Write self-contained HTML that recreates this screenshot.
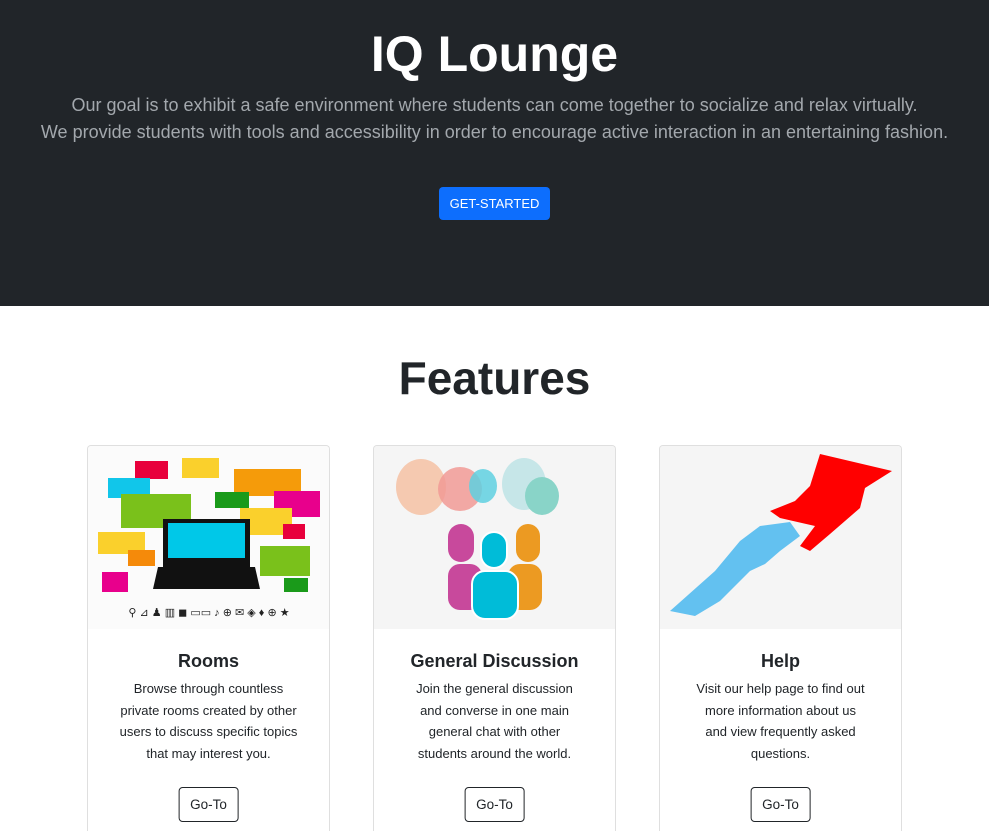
<!DOCTYPE html>
<html><head><meta charset="utf-8"><style>
*{box-sizing:border-box;margin:0;padding:0}
body{width:989px;height:830px;overflow:hidden;background:#fff;font-family:"Liberation Sans",sans-serif;color:#212529;position:relative}
.hero{background:#212529;height:306px;text-align:center;padding-top:24px}
.hero h1{color:#fff;font-size:50px;font-weight:700;line-height:60px}
.hero p{color:#a3a8ad;font-size:18px;line-height:27px;margin-top:8px}
.btn{display:inline-block;margin-top:41px;background:#0d6efd;color:#fff;font-size:13px;height:33px;line-height:33px;border-radius:4px;width:111px;white-space:nowrap}
h2{text-align:center;font-size:46px;font-weight:700;margin-top:44px;line-height:56px}
.card{position:absolute;top:445px;width:243px;height:386px;border:1px solid #dfdfdf;border-bottom:none;border-radius:4px 4px 0 0;overflow:hidden;text-align:center}
.img{height:183px;background:#f5f5f5}
.card h3{font-size:18px;font-weight:700;margin-top:21px;line-height:22px}
.card p{font-size:13px;line-height:21.7px;margin:6px auto 0;width:230px;white-space:nowrap}
.go{position:absolute;top:341px;left:50%;transform:translateX(-50%);border:1px solid #212529;border-radius:4px;height:35px;line-height:33px;padding:0 11px;font-size:13.5px;white-space:nowrap}
</style></head><body>
<div class="hero"><h1>IQ Lounge</h1>
<p>Our goal is to exhibit a safe environment where students can come together to socialize and relax virtually.<br>We provide students with tools and accessibility in order to encourage active interaction in an entertaining fashion.</p>
<span class="btn">GET-STARTED</span></div>
<h2>Features</h2>
<div class="card" style="left:87px"><div class="img" style="background:#fbfbfb"><svg width="243" height="183">
<rect x="47" y="15" width="33" height="18" fill="#e8003c"/><rect x="94" y="12" width="37" height="20" fill="#fad02c"/>
<rect x="20" y="32" width="42" height="20" fill="#11c6ea"/><rect x="146" y="23" width="67" height="27" fill="#f59b0a"/>
<rect x="33" y="48" width="70" height="34" fill="#7ac11b"/><rect x="127" y="46" width="34" height="16" fill="#1a9a1a"/>
<rect x="186" y="45" width="46" height="26" fill="#e8008c"/><rect x="152" y="62" width="52" height="27" fill="#fad02c"/>
<rect x="10" y="86" width="47" height="22" fill="#fad02c"/><rect x="40" y="104" width="27" height="16" fill="#f58a0a"/>
<rect x="195" y="78" width="22" height="15" fill="#e8003c"/><rect x="172" y="100" width="50" height="30" fill="#7ac11b"/>
<rect x="14" y="126" width="26" height="20" fill="#e8008c"/><rect x="196" y="132" width="24" height="14" fill="#1a9a1a"/>
<rect x="75" y="73" width="87" height="48" fill="#111"/><rect x="80" y="77" width="77" height="35" fill="#00c8e8"/>
<polygon points="70,121 167,121 172,143 65,143" fill="#111"/>
<text x="121" y="170" font-size="11" text-anchor="middle" fill="#222">⚲ ⊿ ♟ ▥ ◼ ▭▭ ♪ ⊕ ✉ ◈ ♦ ⊕ ★</text></svg></div>
<h3>Rooms</h3><p>Browse through countless<br>private rooms created by other<br>users to discuss specific topics<br>that may interest you.</p><span class="go">Go-To</span></div>
<div class="card" style="left:373px"><div class="img"><svg width="243" height="183">
<ellipse cx="47" cy="41" rx="25" ry="28" fill="#f5c9b0"/><ellipse cx="86" cy="43" rx="22" ry="22" fill="#f19a95" opacity=".85"/>
<ellipse cx="109" cy="40" rx="14" ry="17" fill="#5fd0e0" opacity=".85"/><ellipse cx="150" cy="38" rx="22" ry="26" fill="#c6e6e8"/>
<ellipse cx="168" cy="50" rx="17" ry="19" fill="#89d4c8"/>
<rect x="74" y="78" width="26" height="38" rx="13" fill="#c8499c"/><rect x="142" y="78" width="24" height="38" rx="12" fill="#ec9a22"/>
<rect x="74" y="118" width="34" height="46" rx="12" fill="#c8499c"/><rect x="134" y="118" width="34" height="46" rx="12" fill="#ec9a22"/>
<rect x="107" y="86" width="26" height="36" rx="13" fill="#00bcd8" stroke="#fff" stroke-width="2"/>
<rect x="98" y="125" width="46" height="48" rx="13" fill="#00bcd8" stroke="#fff" stroke-width="2"/></svg></div>
<h3>General Discussion</h3><p>Join the general discussion<br>and converse in one main<br>general chat with other<br>students around the world.</p><span class="go">Go-To</span></div>
<div class="card" style="left:659px"><div class="img"><svg width="243" height="183">
<polygon points="160,8 232,25 205,42 200,62 170,88 150,105 140,100 155,80 120,72 110,65 135,55 150,40" fill="#f00"/>
<polygon points="10,165 55,125 80,95 100,80 130,76 140,90 120,105 105,118 90,125 60,155 35,170" fill="#63c1f0"/></svg></div>
<h3>Help</h3><p>Visit our help page to find out<br>more information about us<br>and view frequently asked<br>questions.</p><span class="go">Go-To</span></div>
</body></html>
